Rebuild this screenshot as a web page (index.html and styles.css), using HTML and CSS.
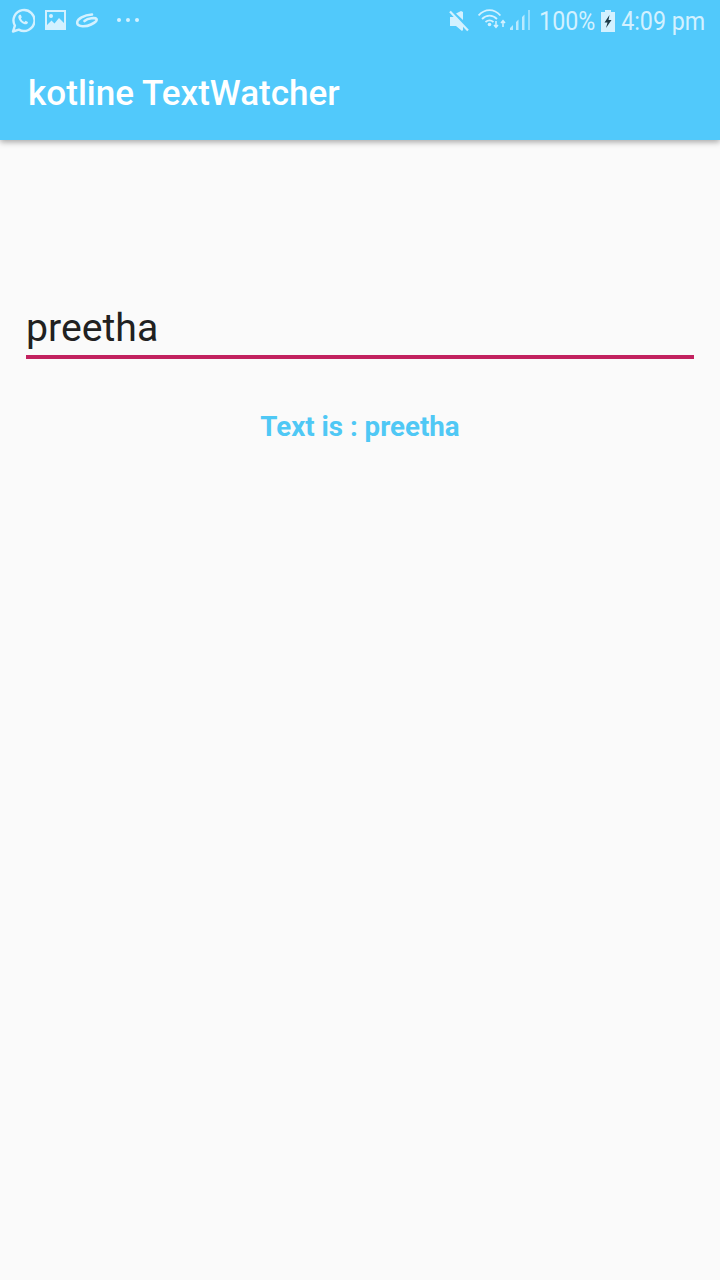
FILE: index.html
```html
<!DOCTYPE html>
<html lang="en">
<head>
  <meta charset="UTF-8">
  <meta name="viewport" content="width=device-width, initial-scale=1.0">
  <title>kotline TextWatcher</title>
  <link rel="stylesheet" href="styles.css">
</head>
<body>

  <header class="app-header">
    <div class="status-bar">
      <div class="status-left">
        <!-- whatsapp -->
        <svg class="icon" width="24" height="25" viewBox="0 0 24 25">
          <path d="M2 23.500l1.900-5.800a10.500 10.500 0 1 1 3.900 3.900z" fill="none" stroke="#d3f1ff" stroke-width="2.400" stroke-linejoin="round"/>
          <path d="M8.600 6.800c-.9.4-1.500 1.600-1.200 3 .5 2.600 3.300 5.600 6.200 6.400 1.500.4 2.800-.3 3.200-1.300l.1-1-2.300-1.200-1.100 1.200c-1.500-.5-3-2-3.600-3.500l.9-1.100-1-2.500z" fill="#d3f1ff"/>
        </svg>
        <!-- gallery -->
        <svg class="icon" width="21" height="20" viewBox="0 0 21 20">
          <path fill-rule="evenodd" d="M0 0h21v20H0z M2 2v16h17V2z" fill="#d3f1ff"/>
          <path d="M2 15l4.500-4.500 3 3L14 8l5 5v5H2z" fill="#d3f1ff"/>
          <circle cx="6" cy="6" r="2" fill="#d3f1ff"/>
        </svg>
        <!-- swirl app icon -->
        <svg class="icon" width="22" height="15" viewBox="0 0 22 15">
          <path d="M16 1.500C8 2 1 6 1.200 10c.3 4 8.800 4 13.800 1.500 4-2 6.500-3.500 5.500-5.500-1-1.500-8.500-1-12 2" fill="none" stroke="#d3f1ff" stroke-width="2.600" stroke-linecap="round"/>
        </svg>
        <div class="more-dots"><span></span><span></span><span></span></div>
      </div>
      <div class="status-right">
        <!-- mute -->
        <svg class="icon" width="20" height="22" viewBox="0 0 20 22">
          <path d="M1 7h4l1-1 8 9v5l-1 1-6-5H1z M7 3.500L12 1l2 1v8z" fill="#d3f1ff"/>
          <path d="M1 1.500L19 20.500" stroke="#d3f1ff" stroke-width="2.200"/>
        </svg>
        <!-- wifi + signal -->
        <svg class="icon icon-wifi" width="54" height="24" viewBox="0 0 54 24">
          <g fill="none" stroke="#d3f1ff" stroke-width="1.800">
            <path d="M.6 6.500C7-.6 16-.6 22.400 6.500"/>
            <path d="M4 10c4.500-4.400 10.500-4.400 15 0"/>
            <path d="M7.500 13c2.500-2 5.500-2 8 0"/>
          </g>
          <circle cx="11.500" cy="15.500" r="1.800" fill="#d3f1ff"/>
          <path d="M18 12v6M16 16l2 2.300 2-2.300M25 18v-6M23 14l2-2.300 2 2.300" fill="none" stroke="#d3f1ff" stroke-width="1.500"/>
          <path d="M32 21v-2l3-3v5z M38 21v-8l2.500-2.500V21z M44 21V8l2.500-2.500V21z" fill="#d3f1ff" opacity=".8"/>
          <path d="M50 21V1h2v20z" fill="#d3f1ff" opacity=".55"/>
        </svg>
        <span class="status-text status-pct">100%</span>
        <!-- battery -->
        <svg class="icon icon-battery" width="14" height="22" viewBox="0 0 14 22">
          <path d="M4 0h6v2h4v20H0V2h4z" fill="#d3f1ff"/>
          <path d="M8.500 5L3.500 12.500h3L5 18l5.500-8h-3z" fill="#1d3a48"/>
        </svg>
        <span class="status-text">4:09 pm</span>
      </div>
    </div>
    <h1 class="app-title">kotline TextWatcher</h1>
  </header>

  <main class="content">
    <div class="field">preetha</div>
    <p class="result">Text is : preetha</p>
  </main>

</body>
</html>
```

FILE: styles.css
```css
* { box-sizing: border-box; }

html, body {
  height: 100%;
}

body {
  margin: 0;
  font-family: Roboto, sans-serif;
  background: #fafafa;
  overflow: hidden;
}

.app-header {
  height: 140px;
  background: #51c9fb;
  box-shadow: 0 2px 6px rgba(0, 0, 0, 0.35);
}

.status-bar {
  height: 42px;
  padding: 0 12px 0 11px;
  display: flex;
  justify-content: space-between;
  align-items: center;
}

.status-left,
.status-right {
  display: flex;
  align-items: center;
}

.status-left {
  gap: 10px;
  padding-bottom: 2px;
}

.status-right { gap: 4px; }

.icon {
  display: block;
  flex: none;
}

.icon-wifi {
  margin: 0 1px 0 5px;
}

.icon-battery {
  margin-right: -1px;
}

.status-pct {
  margin-right: -1px;
}

.more-dots {
  display: flex;
  gap: 5px;
  margin-left: 9px;
}

.more-dots span {
  width: 4px;
  height: 4px;
  border-radius: 50%;
  background: #d3f1ff;
}

.status-text {
  font-size: 25px;
  line-height: 40px;
  padding-top: 2px;
  color: #d3f1ff;
  transform: scaleX(0.93);
}

.app-title {
  margin: 0;
  padding: 29px 28px 0;
  font-size: 35.100px;
  line-height: 44px;
  font-weight: 500;
  color: #fff;
}

.content {
  padding: 160px 26px 0;
}

.field {
  height: 59px;
  font-size: 39.200px;
  line-height: 57px;
  color: #212121;
  border-bottom: 4px solid #c2225f;
}

.result {
  margin: 48px 0 0;
  text-align: center;
  font-size: 27.700px;
  line-height: 40px;
  font-weight: 700;
  color: #4fc8f5;
}
```
